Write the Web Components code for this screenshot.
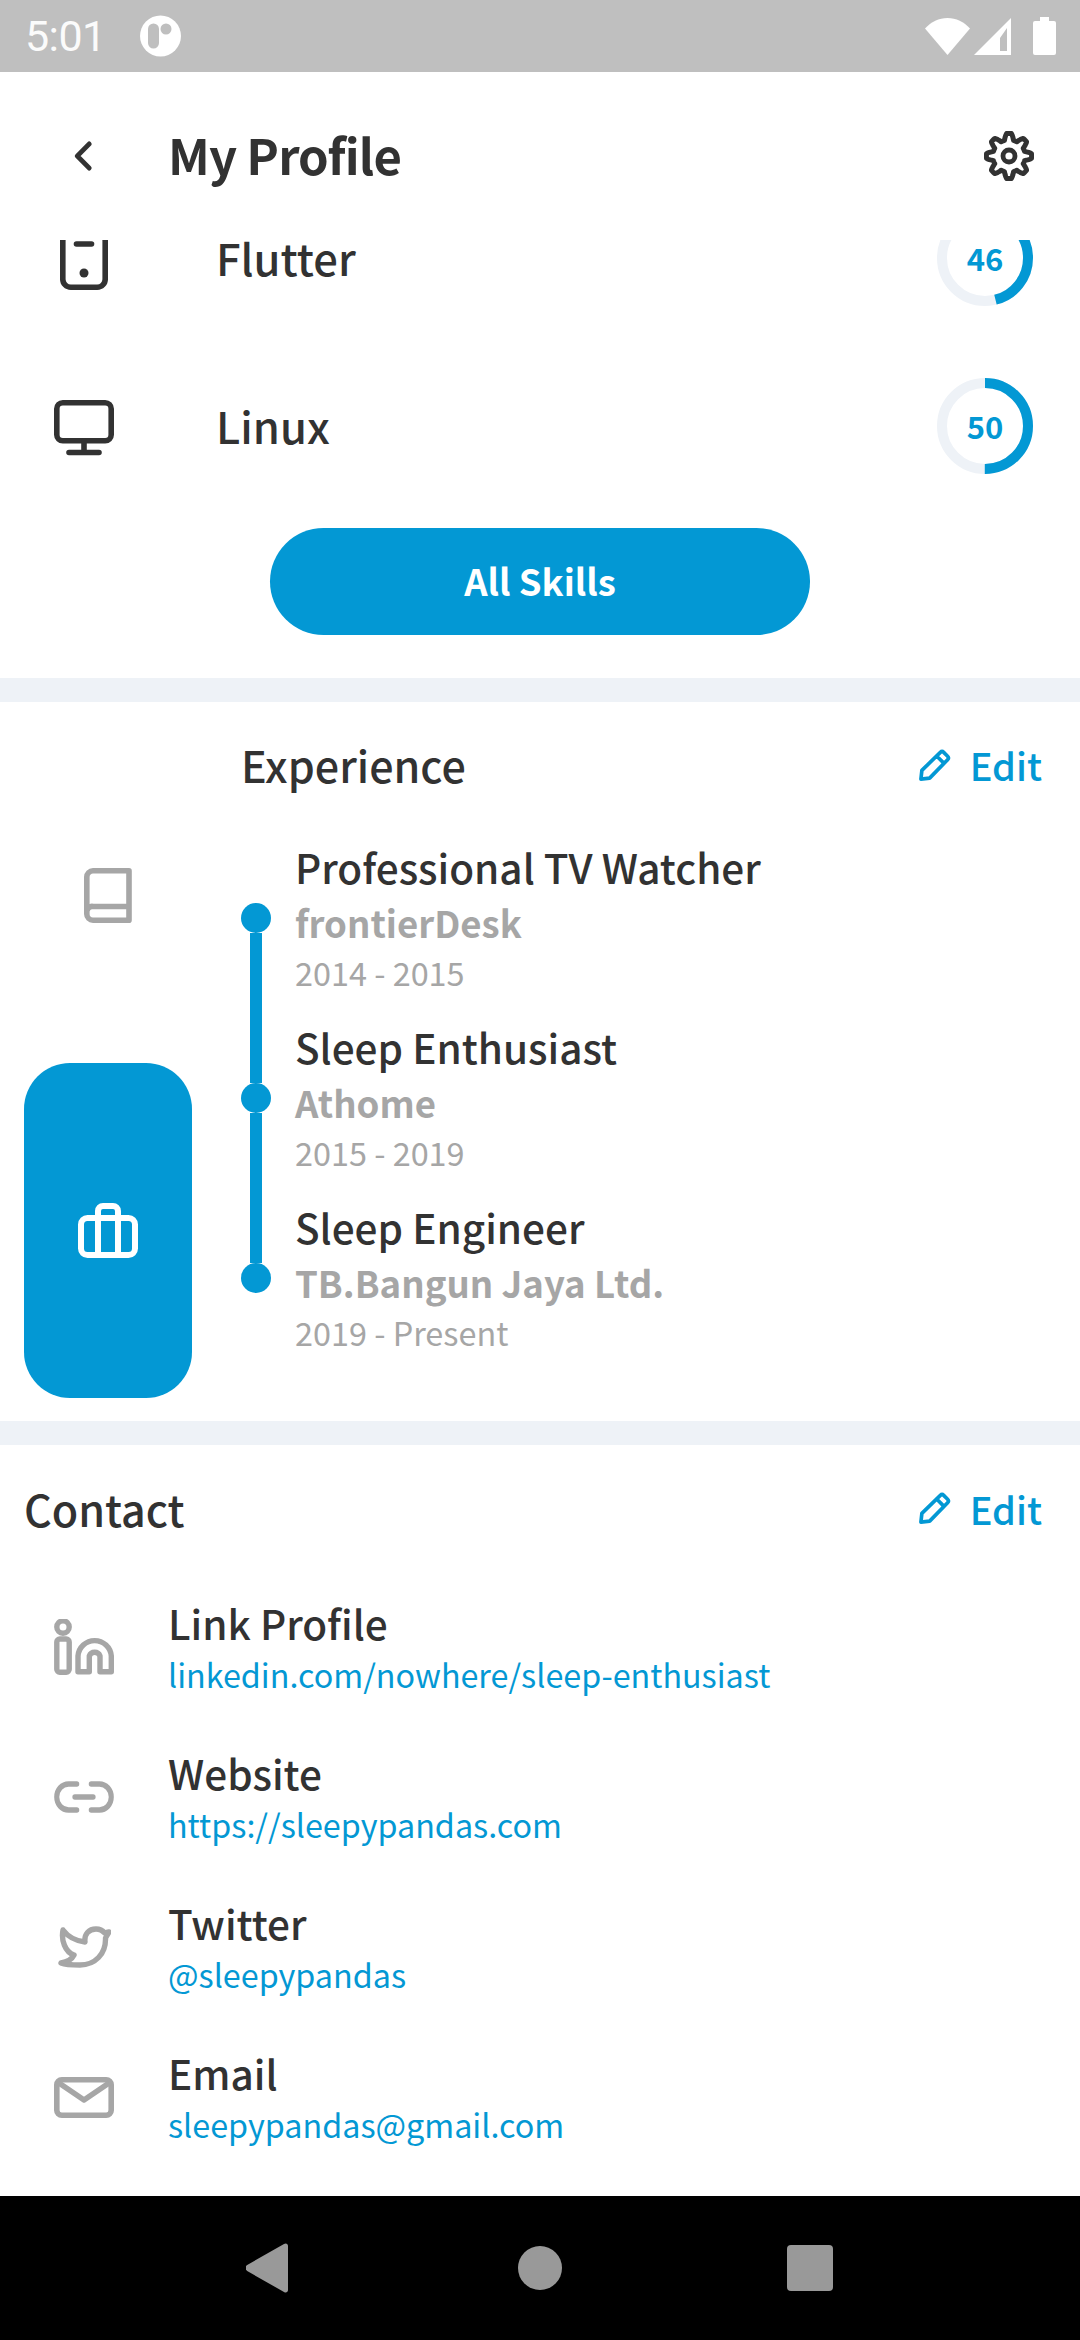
<!doctype html>
<html><head><meta charset="utf-8">
<style>
html,body{margin:0;padding:0;background:#fff}
body{width:1080px;height:2340px;overflow:hidden;font-family:"Noto Sans CJK SC","Noto Sans",sans-serif;color:#323232}
</style></head>
<body>
<app-screen>
  <status-bar></status-bar>
  <top-bar title="My Profile"></top-bar>
  <scroll-area>
    <skill-row name="Flutter" value="46" icon="phone"></skill-row>
    <skill-row name="Linux" value="50" icon="monitor"></skill-row>
    <pill-button label="All Skills"></pill-button>
    <section-gap></section-gap>
    <experience-section>
      <job-item title="Professional TV Watcher" company="frontierDesk" years="2014 - 2015" pos="first"></job-item>
      <job-item title="Sleep Enthusiast" company="Athome" years="2015 - 2019" pos="mid"></job-item>
      <job-item title="Sleep Engineer" company="TB.Bangun Jaya Ltd." years="2019 - Present" pos="last"></job-item>
    </experience-section>
    <section-gap></section-gap>
    <contact-section>
      <contact-row icon="linkedin" label="Link Profile" value="linkedin.com/nowhere/sleep-enthusiast"></contact-row>
      <contact-row icon="link" label="Website" value="https://sleepypandas.com"></contact-row>
      <contact-row icon="twitter" label="Twitter" value="@sleepypandas"></contact-row>
      <contact-row icon="mail" label="Email" value="sleepypandas@gmail.com"></contact-row>
    </contact-section>
  </scroll-area>
  <nav-bar></nav-bar>
</app-screen>
<script>
const BLUE='#0398d4', INK='#323232', GREY='#a6a6a6';
function gearPath(){
  const cx=25,cy=25,n=8;let d='';
  for(let i=0;i<=240;i++){
    const t=i/240*Math.PI*2;
    const s=Math.max(-1,Math.min(1,Math.cos(n*t)*1.5));
    const r=19.4+3.2*s;
    d+=(i?'L':'M')+(cx+r*Math.sin(t)).toFixed(2)+' '+(cy-r*Math.cos(t)).toFixed(2);
  }
  return d+'Z';
}
const ICONS={
  back:{vb:'0 0 20 30',s:`<path d="M17 3 4.500 15 17 27" fill="none" stroke="${INK}" stroke-width="5" stroke-linecap="round" stroke-linejoin="round"/>`},
  gear:{vb:'0 0 50 50',s:`<path d="${gearPath()}" fill="none" stroke="${INK}" stroke-width="5" stroke-linejoin="round"/><circle cx="25" cy="25" r="6" fill="none" stroke="${INK}" stroke-width="4.800"/>`},
  phone:{vb:'0 0 48 60',s:`<rect x="2.800" y="2.800" width="42.400" height="54.400" rx="8" fill="none" stroke="currentColor" stroke-width="5.600"/><path d="M16.500 14h15" stroke="currentColor" stroke-width="5.600" stroke-linecap="round"/><circle cx="24" cy="43" r="4.500" fill="currentColor"/>`},
  monitor:{vb:'0 0 60 56',s:`<rect x="2.800" y="2.800" width="54.400" height="38" rx="6" fill="none" stroke="currentColor" stroke-width="5.600"/><path d="M30 41v11M15 52.500h30" stroke="currentColor" stroke-width="5.600" stroke-linecap="round"/>`},
  book:{vb:'0 0 48 55',s:`<path d="M45 2.800H9A6.200 6.200 0 0 0 2.800 9v37A6.200 6.200 0 0 0 9 52.200h36zM3 43a5 5 0 0 1 6-4.500h36" fill="none" stroke="currentColor" stroke-width="5.600" stroke-linejoin="round"/>`},
  case:{vb:'0 0 60 55',s:`<rect x="3" y="15" width="54" height="37" rx="6.500" fill="none" stroke="currentColor" stroke-width="6"/><path d="M20 15V8a5 5 0 0 1 5-5h10a5 5 0 0 1 5 5v7M20 15v37M40 15v37" fill="none" stroke="currentColor" stroke-width="6"/>`},
  pencil:{vb:'0 0 34 34',s:`<path d="M3 31l1-9L23 3.500a2.500 2.500 0 0 1 3.500 0l4 4a2.500 2.500 0 0 1 0 3.500L12 30zM19.500 7.500l7 7" fill="none" stroke="currentColor" stroke-width="3.800" stroke-linejoin="round"/>`},
  linkedin:{vb:'0 0 60 56',s:`<circle cx="9" cy="8" r="6.200" fill="none" stroke="currentColor" stroke-width="5.400"/><rect x="2.800" y="20" width="12.400" height="33.200" rx="3" fill="none" stroke="currentColor" stroke-width="5.400"/><path d="M24 52.800V37A16.700 16.700 0 0 1 57.300 37V52.800H46V37A5.700 5.700 0 0 0 35.300 37V52.800z" fill="none" stroke="currentColor" stroke-width="5.400" stroke-linejoin="round"/>`},
  link:{vb:'0 0 66 32',s:`<path d="M25 3H16a13 13 0 0 0 0 26h9M41 3h9a13 13 0 0 1 0 26h-9M23 16h20" fill="none" stroke="currentColor" stroke-width="5.600" stroke-linecap="round"/>`},
  twitter:{vb:'0 0 53 42',s:`<path d="M5 4C11 12 18 15 27 16 26 8 31 3 38 3 42 3 45 5 46.500 7L51 6 47.500 12C48 28 37 39 22 39 14 39 8 39 3 37 9 36 14 33 16 29 7 26 3 14 5 4Z" fill="none" stroke="currentColor" stroke-width="5.400" stroke-linejoin="round"/>`},
  mail:{vb:'0 0 60 41',s:`<rect x="2.800" y="2.800" width="54.400" height="35.400" rx="5" fill="none" stroke="currentColor" stroke-width="5.600"/><path d="M5 6l25 17L55 6" fill="none" stroke="currentColor" stroke-width="5.600" stroke-linejoin="round"/>`}
};
function icon(name,w,h,color){
  const i=ICONS[name];
  return `<svg viewBox="${i.vb}" width="${w}" height="${h}" preserveAspectRatio="none" style="display:block;color:${color}">${i.s}</svg>`;
}
class Base extends HTMLElement{
  connectedCallback(){
    if(this.shadowRoot)return;
    this.attachShadow({mode:'open'}).innerHTML=this.render();
  }
  a(n){return this.getAttribute(n)||''}
}
function def(name,fn){customElements.define(name,class extends Base{render(){return fn(this)}});}

def('app-screen',()=>`<style>:host{display:flex;flex-direction:column;width:1080px;height:2340px;background:#fff}</style><slot></slot>`);

def('status-bar',()=>`<style>
:host{display:flex;align-items:center;height:72px;background:#bfbfbf;color:#fff;padding:0 24px 0 25px;box-sizing:border-box;flex:none}
.t{font:400 43px/1 Roboto,sans-serif;letter-spacing:-.6px;width:115px;color:#fbfbfb}
.r{margin-left:auto;display:flex;align-items:center}
</style>
<span class="t">5:01</span>
<svg width="41" height="42" viewBox="0 0 41 42"><circle cx="20.500" cy="21" r="20.500" fill="#fff"/><path d="M8 14a5.500 5.500 0 0 1 11 0v14a5.500 5.500 0 0 1-11 0z" fill="#bfbfbf"/><circle cx="26" cy="14" r="5.500" fill="#bfbfbf"/></svg>
<div class="r">
<svg width="45" height="37" viewBox="0 0 45 37" style="margin-right:4px"><path d="M22.500 37 0 10.500C6 4 14 0 22.500 0S39 4 45 10.500z" fill="#fff"/></svg>
<svg width="37" height="37" viewBox="0 0 37 37" style="margin-right:22px"><path fill-rule="evenodd" d="M37 0v37H0zM26 20v13h7V10z" fill="#fff"/></svg>
<svg width="23" height="38" viewBox="0 0 23 38"><path d="M7 0h9v4h5a2 2 0 0 1 2 2v30a2 2 0 0 1-2 2H2a2 2 0 0 1-2-2V6a2 2 0 0 1 2-2h5z" fill="#fff"/></svg>
</div>`);

def('top-bar',e=>`<style>
:host{display:flex;align-items:center;height:168px;flex:none;box-sizing:border-box;padding:0 46px 0 73px;background:#fff}
h1{margin:-5px 0 0 76px;font:700 49px/1 "Noto Sans CJK SC",sans-serif;color:${INK};letter-spacing:-.9px}
.g{margin-left:auto}
</style>${icon('back',19,30,INK)}<h1>${e.a('title')}</h1><div class="g">${icon('gear',50,50,INK)}</div>`);

def('scroll-area',()=>`<style>:host{display:block;flex:1;min-height:0;overflow:hidden}.in{margin-top:-64px}</style><div class="in"><slot></slot></div>`);

def('skill-row',e=>{
  const v=+e.a('value'),r=43,c=2*Math.PI*r;
  const ic=e.a('icon');
  return `<style>
:host{display:flex;align-items:center;height:168px;box-sizing:border-box;padding:0 47px 0 54px}
.i{width:60px;height:60px;display:flex;align-items:center;justify-content:center;flex:none;margin-top:0}
.n{margin:-5px 0 0 102px;font:500 43.500px/1 "Noto Sans CJK SC",sans-serif;color:${INK}}
.ring{margin:-4px 0 0 auto;position:relative;width:96px;height:96px;display:grid;place-items:center}
svg.c{position:absolute;inset:0}
b{font:700 31px/1 "Noto Sans CJK SC",sans-serif;color:${BLUE};position:relative;margin-top:-1px}
</style>
<div class="i">${ic==='phone'?icon('phone',48,60,INK):icon('monitor',60,56,INK)}</div>
<div class="n">${e.a('name')}</div>
<div class="ring"><svg class="c" width="96" height="96" viewBox="0 0 96 96"><circle cx="48" cy="48" r="${r}" fill="none" stroke="#eef2f7" stroke-width="10"/><circle cx="48" cy="48" r="${r}" fill="none" stroke="${BLUE}" stroke-width="10" stroke-dasharray="${c*v/100} ${c}" transform="rotate(-90 48 48)"/></svg><b>${v}</b></div>`});

def('pill-button',e=>`<style>
:host{display:flex;justify-content:center;height:166px;box-sizing:border-box;padding-top:16px}
button{width:540px;height:107px;border:0;border-radius:54px;background:${BLUE};color:#fff;font:700 36.500px/1 "Noto Sans CJK SC",sans-serif;padding:0}
</style><button>${e.a('label')}</button>`);

def('section-gap',()=>`<style>:host{display:block;height:24px;background:#eef2f7}</style>`);

def('edit-link',()=>`<style>
:host{display:flex;align-items:center;color:${BLUE};font:500 38px/1 "Noto Sans CJK SC",sans-serif}
span{margin-left:19px}
</style>${icon('pencil',33,33,BLUE)}<span>Edit</span>`);

def('experience-section',()=>`<style>
:host{display:grid;grid-template-columns:168px 1fr;grid-template-rows:128px 1fr;column-gap:49px;box-sizing:border-box;padding:0 38px 24px 24px;height:719px;background:#fff}
.tabs{grid-row:1/3;padding-top:26px;display:flex;flex-direction:column}
.tab{height:335px;border-radius:46px;display:grid;place-items:center;flex:none}
.tab.on{background:${BLUE}}
.head{display:flex;align-items:center;justify-content:space-between;height:128px;box-sizing:border-box;padding-bottom:2px}
h2{margin:-2px 0 0;font:500 43px/1 "Noto Sans CJK SC",sans-serif;color:${INK}}
.list{margin-top:9px;display:flex;flex-direction:column}
</style>
<div class="tabs"><div class="tab">${icon('book',48,55,GREY)}</div><div class="tab on">${icon('case',60,55,'#fff')}</div></div>
<div class="head"><h2>Experience</h2><edit-link></edit-link></div>
<div class="list"><slot></slot></div>`);

def('job-item',e=>{const p=e.a('pos');return `<style>
:host{display:flex;height:180px}
.m{width:30px;flex:none;display:flex;flex-direction:column;align-items:center}
.s{width:12px;background:${BLUE}}
.t{height:64px}.b{flex:1}
.none{background:transparent}
.d{width:30px;height:30px;border-radius:50%;background:${BLUE};flex:none}
.c{margin-left:24px;display:flex;flex-direction:column}
.h{font:500 40.500px/1 "Noto Sans CJK SC",sans-serif;color:${INK};height:58px;margin-top:8px}
.k{font:700 36.600px/1 "Noto Sans CJK SC",sans-serif;color:${GREY};height:51px}
.y{font:400 32.400px/1 "Noto Sans CJK SC",sans-serif;color:${GREY}}
</style>
<div class="m"><div class="s t ${p==='first'?'none':''}"></div><div class="d"></div><div class="s b ${p==='last'?'none':''}"></div></div>
<div class="c"><div class="h">${e.a('title')}</div><div class="k">${e.a('company')}</div><div class="y">${e.a('years')}</div></div>`});

def('contact-section',()=>`<style>
:host{display:block;background:#fff;box-sizing:border-box;padding:0 38px 0 24px}
.head{display:flex;align-items:center;justify-content:space-between;height:127px}
h2{margin:0;font:500 43px/1 "Noto Sans CJK SC",sans-serif;color:${INK}}
</style><div class="head"><h2>Contact</h2><edit-link></edit-link></div><slot></slot>`);

def('contact-row',e=>{
 const s={linkedin:[60,56],link:[66,32],twitter:[53,42],mail:[60,41]}[e.a('icon')];
 return `<style>
:host{display:flex;height:150px;align-items:center}
.i{width:60px;margin-left:30px;display:flex;justify-content:center;flex:none}
.c{margin-left:54px;display:flex;flex-direction:column}
.l{font:500 40.500px/1 "Noto Sans CJK SC",sans-serif;color:${INK};height:55px}
.v{font:400 32.300px/1 "Noto Sans CJK SC",sans-serif;color:${BLUE}}
</style><div class="i">${icon(e.a('icon'),s[0],s[1],GREY)}</div><div class="c"><div class="l">${e.a('label')}</div><div class="v">${e.a('value')}</div></div>`});

def('nav-bar',()=>`<style>
:host{display:grid;grid-template-columns:246px 42px 230px 44px 225px 46px 1fr;align-items:center;height:144px;background:#000;flex:none}
svg{display:block}
i{display:block}
</style>
<i></i><svg width="42" height="50" viewBox="0 0 42 50"><path d="M38 1 1.200 22a3.500 3.500 0 0 0 0 6L38 49c2 1.200 4 .200 4-2V3c0-2.200-2-3.200-4-2z" fill="#999"/></svg>
<i></i><div style="width:44px;height:44px;border-radius:50%;background:#999"></div>
<i></i><div style="width:46px;height:46px;border-radius:4px;background:#999"></div><i></i>`);
</script>
</body></html>
